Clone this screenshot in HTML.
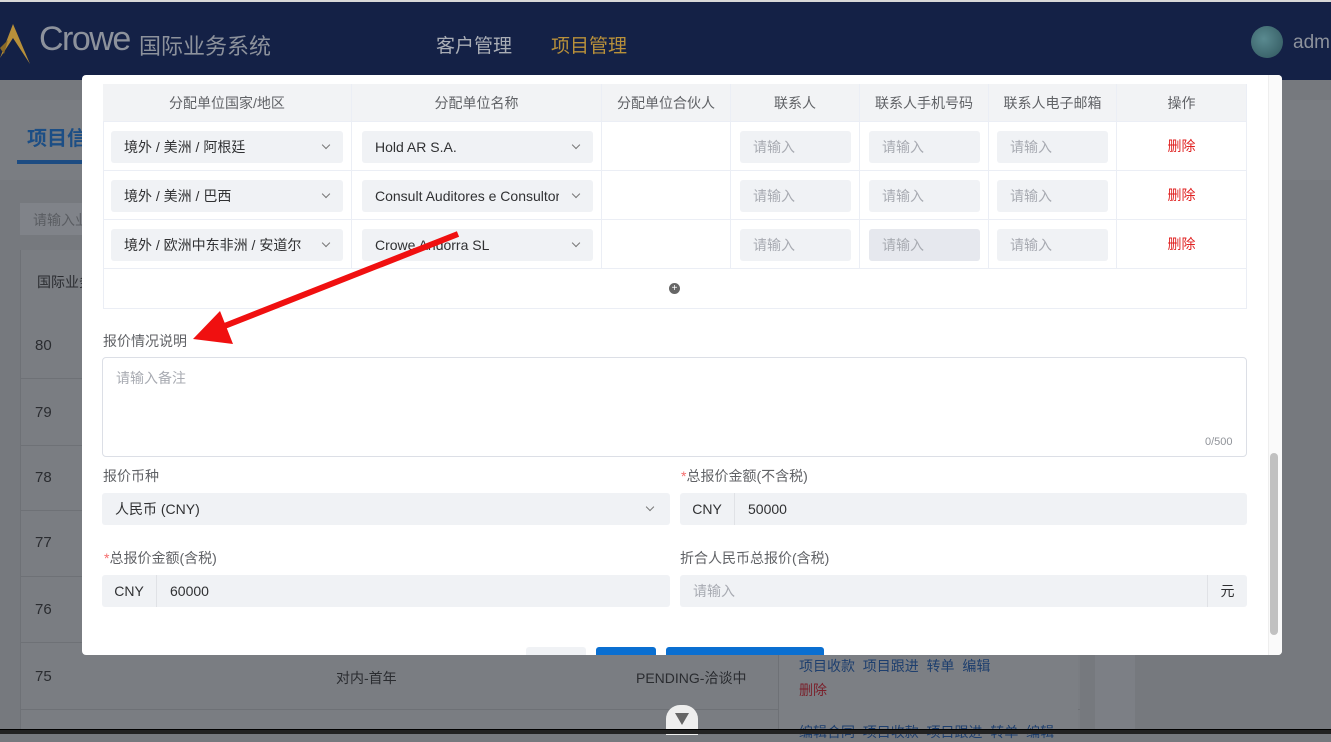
<!DOCTYPE html>
<html><head><meta charset="utf-8"><style>
*{box-sizing:border-box;margin:0;padding:0}
body{width:1331px;height:734px;overflow:hidden;position:relative;background:#76797e;font-family:"Liberation Sans","Noto Sans CJK SC",sans-serif;font-size:14px;color:#303133}
.a{position:absolute}
.hd{left:0;top:0;width:1331px;height:80px;background:#142146;border-top:2px solid #d8d8d8}
.cell{position:absolute;display:flex;align-items:center;justify-content:center;border-right:1px solid #ebeef5;border-bottom:1px solid #ebeef5}
.sel{position:absolute;background:#f0f2f5;border-radius:3px;height:32px;display:flex;align-items:center;padding-left:13px;font-size:14px;color:#303133}
.sel .ar{position:absolute;right:14px;top:11px;width:6px;height:6px;border-right:1.2px solid #777;border-bottom:1.2px solid #777;transform:rotate(45deg)}
.inp{position:absolute;background:#f0f2f5;border-radius:3px;height:32px;display:flex;align-items:center;padding-left:13px;color:#a8abb2;font-size:14px}
.del{color:#e02020;font-size:14px}
.lbl{position:absolute;font-size:14px;color:#606266}
.req{color:#f56c6c}
</style></head><body>
<div class="a hd">
  <svg class="a" style="left:0;top:16px" width="36" height="48" viewBox="0 0 36 48"><path d="M0 40 L13 6 L30 46 L13 20 Z" fill="#b8903a"/><path d="M0 30 L8 22 L4 36Z" fill="#8a6a28"/></svg>
  <div class="a" style="left:39px;top:18px;font-size:34px;color:#8d929c;letter-spacing:-1.5px">Crowe</div>
  <div class="a" style="left:139px;top:27px;font-size:22px;color:#8d929c">国际业务系统</div>
  <div class="a" style="left:436px;top:29px;font-size:19px;color:#a9adb5">客户管理</div>
  <div class="a" style="left:551px;top:29px;font-size:19px;color:#b8903a">项目管理</div>
  <div class="a" style="left:1251px;top:24px;width:32px;height:32px;border-radius:50%;background:radial-gradient(circle at 40% 40%,#5a8a90,#2f555c)"></div>
  <div class="a" style="left:1293px;top:30px;font-size:19px;color:#8d929c">adm</div>
</div>
<div class="a" style="left:0;top:100px;width:1331px;height:80px;background:#7a7d82"></div>
<div class="a" style="left:27px;top:122px;font-size:20px;color:#1c4e85;font-weight:bold">项目信</div>
<div class="a" style="left:17px;top:160px;width:70px;height:4px;background:#1d4c82"></div>
<div class="a" style="left:20px;top:203px;width:70px;height:32px;background:#808389"></div>
<div class="a" style="left:33px;top:210px;color:#5a5d62">请输入业</div>
<div class="a" style="left:20px;top:250px;width:1060px;height:480px;background:#7a7d82;border-left:1px solid #6e7176"></div>
<div class="a" style="left:37px;top:272px;color:#2a2c30">国际业务</div>
<div class="a" style="left:35px;top:337px;color:#2a2c30;font-size:15px">80</div>
<div class="a" style="left:35px;top:404px;color:#2a2c30;font-size:15px">79</div>
<div class="a" style="left:35px;top:469px;color:#2a2c30;font-size:15px">78</div>
<div class="a" style="left:35px;top:534px;color:#2a2c30;font-size:15px">77</div>
<div class="a" style="left:35px;top:601px;color:#2a2c30;font-size:15px">76</div>
<div class="a" style="left:35px;top:668px;color:#2a2c30;font-size:15px">75</div>
<div class="a" style="left:20px;top:378px;width:62px;height:1px;background:#6e7176"></div>
<div class="a" style="left:20px;top:445px;width:62px;height:1px;background:#6e7176"></div>
<div class="a" style="left:20px;top:510px;width:62px;height:1px;background:#6e7176"></div>
<div class="a" style="left:20px;top:576px;width:62px;height:1px;background:#6e7176"></div>
<div class="a" style="left:20px;top:642px;width:62px;height:1px;background:#6e7176"></div>
<div class="a" style="left:20px;top:709px;width:1060px;height:1px;background:#6e7176"></div>
<div class="a" style="left:336px;top:668px;color:#2a2c30">对内-首年</div>
<div class="a" style="left:636px;top:668px;color:#2a2c30">PENDING-洽谈中</div>
<div class="a" style="left:778px;top:655px;width:300px;height:75px;background:#7c7f84;border-left:1px solid #6e7176"></div>
<div class="a" style="left:799px;top:656px;color:#1e3f6e">项目收款&nbsp; 项目跟进&nbsp; 转单&nbsp; 编辑</div>
<div class="a" style="left:799px;top:680px;color:#7a1f2a">删除</div>
<div class="a" style="left:799px;top:722px;color:#1e3f6e">编辑合同&nbsp; 项目收款&nbsp; 项目跟进&nbsp; 转单&nbsp; 编辑</div>
<div class="a" style="left:1095px;top:80px;width:40px;height:650px;background:#7c7f85"></div>
<div class="a" style="left:666px;top:705px;width:32px;height:30px;border-radius:14px 14px 0 0;background:#eee"></div>
<div class="a" style="left:675px;top:713px;width:0;height:0;border-left:7px solid transparent;border-right:7px solid transparent;border-top:12px solid #666"></div>
<div class="a" style="left:0;top:729px;width:1331px;height:5px;background:#222;border-top:1px solid #000"></div>

<div class="a" style="left:82px;top:75px;width:1200px;height:580px;background:#fff;border-radius:4px;overflow:hidden">
 <div class="a" style="left:1186px;top:0;width:14px;height:580px;background:#fafafa;border-left:1px solid #eee"></div>
 <div class="a" style="left:1188px;top:378px;width:8px;height:182px;background:#c1c1c1;border-radius:4px"></div>
</div>
<div class="a" style="left:103px;top:84px;width:1144px;height:225px;border:1px solid #ebeef5;border-right:none;border-bottom:none"></div>
<div class="cell" style="left:103px;top:84px;width:249px;height:38px;background:#f2f3f5;color:#606266">分配单位国家/地区</div>
<div class="cell" style="left:352px;top:84px;width:250px;height:38px;background:#f2f3f5;color:#606266">分配单位名称</div>
<div class="cell" style="left:602px;top:84px;width:129px;height:38px;background:#f2f3f5;color:#606266">分配单位合伙人</div>
<div class="cell" style="left:731px;top:84px;width:129px;height:38px;background:#f2f3f5;color:#606266">联系人</div>
<div class="cell" style="left:860px;top:84px;width:129px;height:38px;background:#f2f3f5;color:#606266">联系人手机号码</div>
<div class="cell" style="left:989px;top:84px;width:128px;height:38px;background:#f2f3f5;color:#606266">联系人电子邮箱</div>
<div class="cell" style="left:1117px;top:84px;width:130px;height:38px;background:#f2f3f5;color:#606266">操作</div>
<div class="cell" style="left:103px;top:122px;width:249px;height:49px"></div>
<div class="cell" style="left:352px;top:122px;width:250px;height:49px"></div>
<div class="cell" style="left:602px;top:122px;width:129px;height:49px"></div>
<div class="cell" style="left:731px;top:122px;width:129px;height:49px"></div>
<div class="cell" style="left:860px;top:122px;width:129px;height:49px"></div>
<div class="cell" style="left:989px;top:122px;width:128px;height:49px"></div>
<div class="cell" style="left:1117px;top:122px;width:130px;height:49px"><span class="del">删除</span></div>
<div class="cell" style="left:103px;top:171px;width:249px;height:49px"></div>
<div class="cell" style="left:352px;top:171px;width:250px;height:49px"></div>
<div class="cell" style="left:602px;top:171px;width:129px;height:49px"></div>
<div class="cell" style="left:731px;top:171px;width:129px;height:49px"></div>
<div class="cell" style="left:860px;top:171px;width:129px;height:49px"></div>
<div class="cell" style="left:989px;top:171px;width:128px;height:49px"></div>
<div class="cell" style="left:1117px;top:171px;width:130px;height:49px"><span class="del">删除</span></div>
<div class="cell" style="left:103px;top:220px;width:249px;height:49px"></div>
<div class="cell" style="left:352px;top:220px;width:250px;height:49px"></div>
<div class="cell" style="left:602px;top:220px;width:129px;height:49px"></div>
<div class="cell" style="left:731px;top:220px;width:129px;height:49px"></div>
<div class="cell" style="left:860px;top:220px;width:129px;height:49px"></div>
<div class="cell" style="left:989px;top:220px;width:128px;height:49px"></div>
<div class="cell" style="left:1117px;top:220px;width:130px;height:49px"><span class="del">删除</span></div>
<div class="cell" style="left:103px;top:269px;width:1144px;height:40px"><div style="width:11px;height:11px;border-radius:50%;background:#666;color:#fff;font-size:10px;line-height:11px;text-align:center">+</div></div>

<div class="sel" style="left:111px;top:131px;width:232px">境外 / 美洲 / 阿根廷<span class="ar"></span></div>
<div class="sel" style="left:111px;top:180px;width:232px">境外 / 美洲 / 巴西<span class="ar"></span></div>
<div class="sel" style="left:111px;top:229px;width:232px">境外 / 欧洲中东非洲 / 安道尔<span class="ar"></span></div>
<div class="sel" style="left:362px;top:131px;width:231px">Hold AR S.A.<span class="ar"></span></div>
<div class="sel" style="left:362px;top:180px;width:231px;overflow:hidden;white-space:nowrap;padding-right:30px"><span style="overflow:hidden;display:block;width:184px">Consult Auditores e Consultores</span><span class="ar"></span></div>
<div class="sel" style="left:362px;top:229px;width:231px">Crowe Andorra SL<span class="ar"></span></div>
<div class="inp" style="left:740px;top:131px;width:111px">请输入</div>
<div class="inp" style="left:869px;top:131px;width:111px">请输入</div>
<div class="inp" style="left:997px;top:131px;width:111px">请输入</div>
<div class="inp" style="left:740px;top:180px;width:111px">请输入</div>
<div class="inp" style="left:869px;top:180px;width:111px">请输入</div>
<div class="inp" style="left:997px;top:180px;width:111px">请输入</div>
<div class="inp" style="left:740px;top:229px;width:111px">请输入</div>
<div class="inp" style="left:869px;top:229px;width:111px;background:#e6e8ee">请输入</div>
<div class="inp" style="left:997px;top:229px;width:111px">请输入</div>

<div class="lbl" style="left:103px;top:331px">报价情况说明</div>
<div class="a" style="left:102px;top:357px;width:1145px;height:100px;border:1px solid #dcdfe6;border-radius:4px"></div>
<div class="a" style="left:116px;top:368px;color:#a8abb2">请输入备注</div>
<div class="a" style="left:1205px;top:436px;color:#909399;font-size:11px">0/500</div>

<div class="lbl" style="left:103px;top:466px">报价币种</div>
<div class="sel" style="left:102px;top:493px;width:568px;padding-left:13px">人民币 (CNY)<span class="ar" style="right:17px"></span></div>
<div class="lbl" style="left:681px;top:466px"><span class="req">*</span>总报价金额(不含税)</div>
<div class="sel" style="left:680px;top:493px;width:567px;padding:0"><span style="width:55px;text-align:center;border-right:1px solid #e0e2e6;line-height:32px">CNY</span><span style="padding-left:13px">50000</span></div>
<div class="lbl" style="left:104px;top:548px"><span class="req">*</span>总报价金额(含税)</div>
<div class="sel" style="left:102px;top:575px;width:568px;padding:0"><span style="width:55px;text-align:center;border-right:1px solid #e0e2e6;line-height:32px">CNY</span><span style="padding-left:13px">60000</span></div>
<div class="lbl" style="left:680px;top:548px">折合人民币总报价(含税)</div>
<div class="inp" style="left:680px;top:575px;width:567px">请输入<span style="position:absolute;right:0;top:0;width:40px;height:32px;border-left:1px solid #e0e2e6;color:#303133;text-align:center;line-height:32px">元</span></div>

<div class="a" style="left:526px;top:647px;width:60px;height:8px;background:#f0f2f5;border-radius:3px 3px 0 0"></div>
<div class="a" style="left:596px;top:647px;width:60px;height:8px;background:#0a6fd1;border-radius:3px 3px 0 0"></div>
<div class="a" style="left:666px;top:647px;width:158px;height:8px;background:#0a6fd1;border-radius:3px 3px 0 0"></div>

<svg class="a" style="left:0;top:0" width="1331" height="734"><line x1="458" y1="234" x2="222" y2="327" stroke="#f01010" stroke-width="6"/><polygon points="193,339 220,311 233,344" fill="#f01010"/></svg>
</body></html>
